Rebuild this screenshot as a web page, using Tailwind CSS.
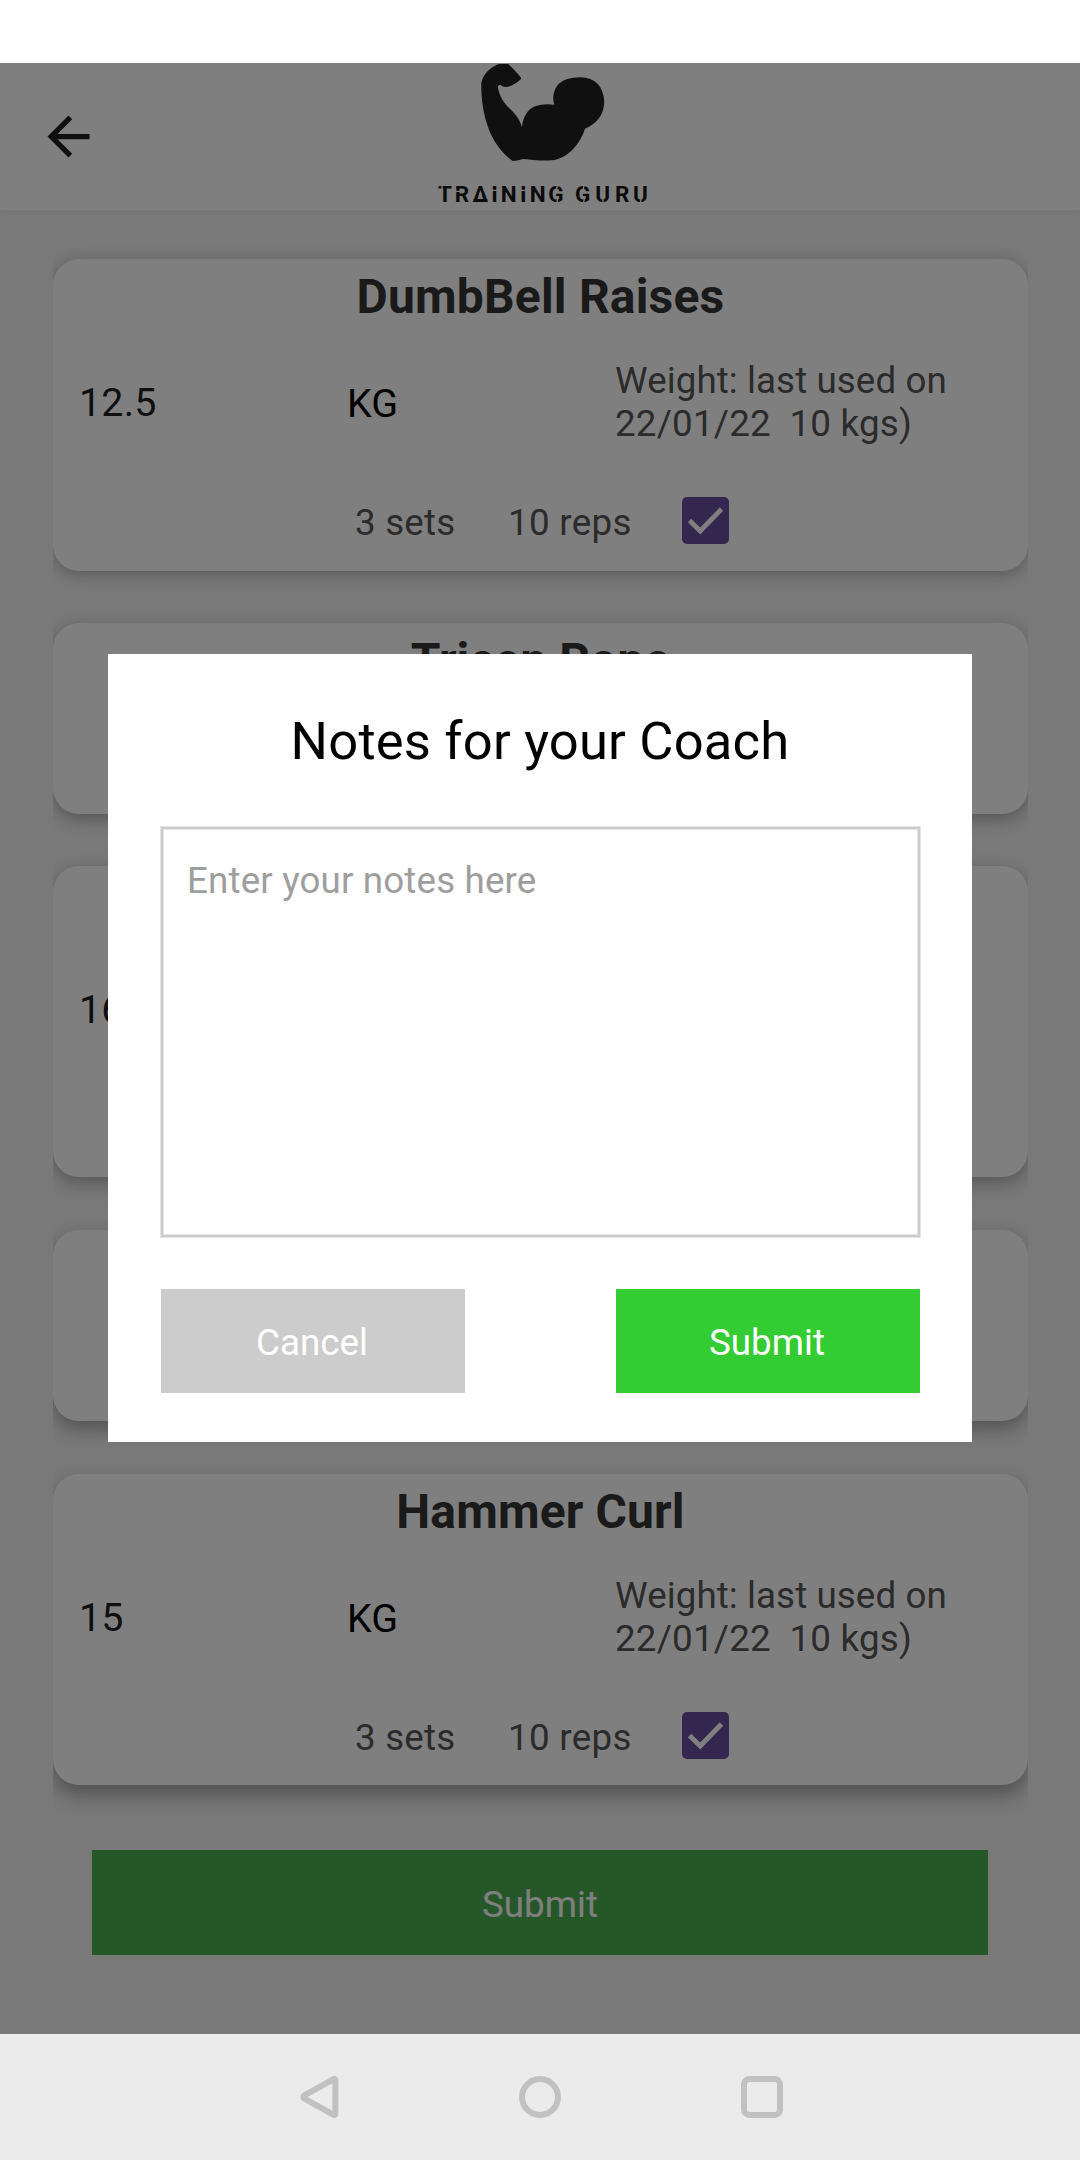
<!DOCTYPE html>
<html lang="en">
<head>
<meta charset="utf-8">
<title>Training Guru</title>
<script src="https://cdn.jsdelivr.net/npm/@tailwindcss/browser@4"></script>
</head>
<body class="flex h-[2160px] w-[1080px] flex-col overflow-hidden bg-white font-['Roboto',sans-serif] text-[36.75px] leading-[43px] tracking-[0.05px]">
  <!-- status bar -->
  <div class="h-[63px] shrink-0 bg-white"></div>

  <div class="relative flex h-[1971px] shrink-0 flex-col overflow-hidden bg-[#f2f2f2]">
    <header class="flex h-[147px] shrink-0 items-center bg-white shadow-[0_0_10px_rgba(0,0,0,0.06)]">
      <svg class="ml-[37px] h-[63px] w-[63px]" viewBox="0 0 24 24" fill="#1f1f1f"><path d="M20 11H7.83l5.59-5.59L12 4l-8 8 8 8 1.41-1.41L7.83 13H20z"/></svg>
      <svg class="ml-[320px] h-[147px] w-[250px]" viewBox="0 39 750 441">
        <path fill="#202020" d="M237 42H264C277 53 292 69 303 83Q305 87 299 91C286 102 272 111 257 111C250 111 247 108 241 105Q233 103 234 113C238 136 250 158 270 176C291 196 301 214 306 231C309 198 325 177 345 169C362 162 385 161 403 164C397 148 399 125 411 108C425 90 450 82 482 82C525 83 550 108 553 155C552 193 530 222 495 236C480 282 445 322 402 330C370 334 340 330 310 327Q290 333 278 333C248 311 218 275 203 228C190 190 183 145 184 100C188 72 212 51 237 42Z"/>
        <text y="456" x="54 104 158 214 242 300 329 385 430 465 526 585 639" font-family="Roboto" font-size="67.5" font-weight="700" fill="#161616">TRAINING GURU</text>
        <!-- stencil gaps in the wordmark -->
        <g fill="none" stroke="#fff" stroke-width="4">
          <path d="M66 404v14M104 424h17M215 421h16M301 421h16"/>
          <path d="M410 462l3-16M412 404l-2 14M490 462l3-16M492 404l-2 14M549 442v18M662 442v18"/>
        </g>
        <path fill="#fff" d="M181 423L190 449H172Z"/>
        <path fill="#161616" d="M161 447h41v9h-41z"/>
      </svg>
    </header>

    <main class="flex flex-col pt-[49px] pr-[52px] pl-[53px]">
      <section class="-my-[26px] overflow-hidden py-[26px]">
        <div class="flex h-[312px] flex-col rounded-[26px] bg-white pt-[10px] shadow-[0_3px_16px_rgba(0,0,0,0.28)]">
          <h2 class="text-center text-[48px] leading-[55px] font-bold tracking-[0.2px] text-[#343434]">DumbBell Raises</h2>
          <div class="flex h-[156px] items-center pl-[26px]">
            <div class="w-[268px] pt-px text-[39.4px] leading-[46px] tracking-[0.2px] text-[#1e1e1e]">12.5</div>
            <div class="w-[268px] pt-[3px] text-[39.4px] leading-[46px] text-black">KG</div>
            <div class="whitespace-pre text-[#565656]"><span class="tracking-[0.08px]">Weight: last used on</span><br><span class="tracking-[0.2px]">22/01/22  10 kgs)</span></div>
          </div>
          <div class="mt-[17px] flex h-[47px] items-center pl-[302px] text-[#565656]">
            <span class="w-[153px] pt-[4px] tracking-[0.2px]">3 sets</span>
            <span class="w-[174px] pt-[4px] tracking-[0.3px]">10 reps</span>
            <svg class="h-[47px] w-[47px]" viewBox="0 0 47 47"><rect width="47" height="47" rx="5" fill="#664d9f"/><path d="M7.5 23.5L18.2 34L39.5 12" fill="none" stroke="#fff" stroke-width="4.8"/></svg>
          </div>
        </div>
      </section>

      <section class="mt-[26px] overflow-hidden py-[26px]">
        <div class="h-[191px] rounded-[26px] bg-white pt-[10px] shadow-[0_5px_17px_rgba(0,0,0,0.3)]">
          <h2 class="text-center text-[48px] leading-[55px] font-bold tracking-[0.05px] text-[#343434]">Tricep Rope</h2>
        </div>
      </section>

      <section class="overflow-hidden py-[26px]">
        <div class="flex h-[311px] flex-col rounded-[26px] bg-white pt-[65px] shadow-[0_6px_18px_rgba(0,0,0,0.3)]">
          <div class="flex h-[157px] items-center pl-[26px] text-[39.4px] leading-[46px] text-[#1e1e1e]">16</div>
        </div>
      </section>

      <section class="overflow-hidden py-[26px]">
        <div class="mt-[1px] h-[191px] rounded-[26px] bg-white shadow-[0_8px_19px_rgba(0,0,0,0.32)]"></div>
      </section>

      <section class="overflow-hidden pt-[27px] pb-[40px]">
        <div class="flex h-[311px] flex-col rounded-[26px] bg-white pt-[10px] shadow-[0_10px_20px_rgba(0,0,0,0.34)]">
          <h2 class="text-center text-[48px] leading-[55px] font-bold tracking-[0.15px] text-[#343434]">Hammer Curl</h2>
          <div class="flex h-[156px] items-center pl-[26px]">
            <div class="w-[268px] pt-px text-[39.4px] leading-[46px] text-[#1e1e1e]">15</div>
            <div class="w-[268px] pt-[3px] text-[39.4px] leading-[46px] text-black">KG</div>
            <div class="whitespace-pre text-[#565656]"><span class="tracking-[0.08px]">Weight: last used on</span><br><span class="tracking-[0.2px]">22/01/22  10 kgs)</span></div>
          </div>
          <div class="mt-[17px] flex h-[47px] items-center pl-[302px] text-[#565656]">
            <span class="w-[153px] pt-[4px] tracking-[0.2px]">3 sets</span>
            <span class="w-[174px] pt-[4px] tracking-[0.3px]">10 reps</span>
            <svg class="h-[47px] w-[47px]" viewBox="0 0 47 47"><rect width="47" height="47" rx="5" fill="#664d9f"/><path d="M7.5 23.5L18.2 34L39.5 12" fill="none" stroke="#fff" stroke-width="4.8"/></svg>
          </div>
        </div>
      </section>

      <button class="mr-[40px] ml-[39px] mt-[25px] h-[105px] bg-[#4caf50] pt-[4px] text-white">Submit</button>
    </main>

    <!-- dialog over the dimmed page -->
    <div class="absolute inset-0 flex items-start justify-center bg-black/50 pt-[591px]">
      <div class="flex h-[788px] w-[864px] flex-col bg-white px-[52px] pt-[57px]">
        <h1 class="text-center text-[52.5px] leading-[60px] tracking-[0.2px] text-black">Notes for your Coach</h1>
        <div class="ml-px mt-[56px] h-[410px] border-2 border-[#cbcbcb] pt-[30px] pl-[24px] tracking-[0.15px] text-[#9e9e9e] shadow-[0_0_0_1px_#e6e6e6,inset_0_0_0_1px_#e6e6e6]">Enter your notes here</div>
        <div class="mt-[52px] flex justify-between pl-px">
          <button class="h-[104px] w-[304px] bg-[#ccc] pt-[3px] pr-[2px] text-white">Cancel</button>
          <button class="h-[104px] w-[304px] bg-[#33cc33] pt-[3px] pr-[2px] text-white">Submit</button>
        </div>
      </div>
    </div>
  </div>

  <!-- navigation bar -->
  <nav class="flex h-[126px] shrink-0 items-center justify-center gap-[174px] bg-[#ebebeb]">
    <svg class="h-12 w-12" viewBox="0 0 48 48" fill="none" stroke="#c1c1c1" stroke-width="6" stroke-linejoin="round"><path d="M41.4 7.6Q41.4 5 39.2 6.3L10.4 22.4Q8 24 10.4 25.6L39.2 41.7Q41.4 43 41.4 40.4Z"/></svg>
    <svg class="h-12 w-12" viewBox="0 0 48 48" fill="none" stroke="#c1c1c1" stroke-width="6"><circle cx="24" cy="24" r="18"/></svg>
    <svg class="h-12 w-12" viewBox="0 0 48 48" fill="none" stroke="#c1c1c1" stroke-width="6"><rect x="6" y="6" width="36" height="36" rx="5.5"/></svg>
  </nav>
</body>
</html>
